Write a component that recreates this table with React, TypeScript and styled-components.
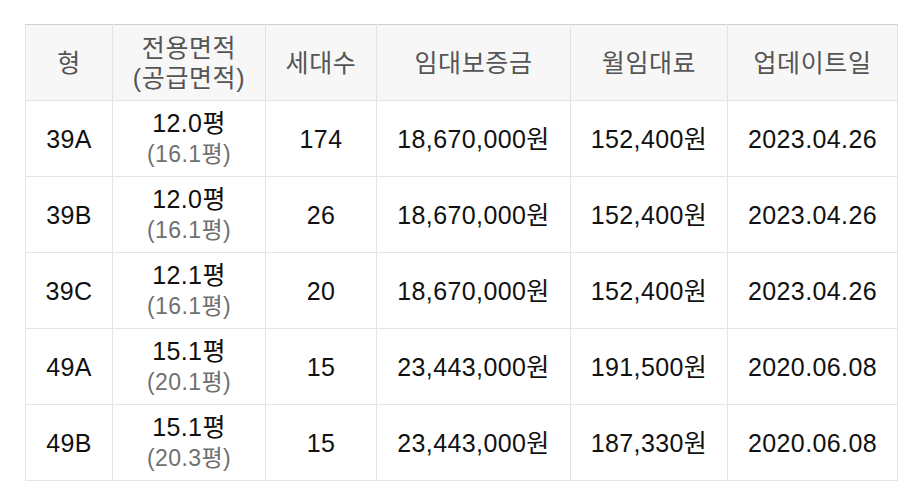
import React from 'react'
import styled, { createGlobalStyle } from 'styled-components'

type Row = {
  type: string
  area: string
  supply: string
  units: string
  deposit: string
  rent: string
  updated: string
}

const rows: Row[] = [
  { type: '39A', area: '12.0평', supply: '(16.1평)', units: '174', deposit: '18,670,000원', rent: '152,400원', updated: '2023.04.26' },
  { type: '39B', area: '12.0평', supply: '(16.1평)', units: '26', deposit: '18,670,000원', rent: '152,400원', updated: '2023.04.26' },
  { type: '39C', area: '12.1평', supply: '(16.1평)', units: '20', deposit: '18,670,000원', rent: '152,400원', updated: '2023.04.26' },
  { type: '49A', area: '15.1평', supply: '(20.1평)', units: '15', deposit: '23,443,000원', rent: '191,500원', updated: '2020.06.08' },
  { type: '49B', area: '15.1평', supply: '(20.3평)', units: '15', deposit: '23,443,000원', rent: '187,330원', updated: '2020.06.08' },
]

const colWidths = [87, 153, 111, 194, 157, 170]

const App: React.FC = () => {
  return (
    <>
      <GlobalStyle />
      <Page>
        <Table>
          <colgroup>
            {colWidths.map((w, i) => (
              <col key={i} style={{ width: w }} />
            ))}
          </colgroup>
          <thead>
            <tr>
              <HeadCell>형</HeadCell>
              <HeadCell>
                전용면적
                <br />
                (공급면적)
              </HeadCell>
              <HeadCell>세대수</HeadCell>
              <HeadCell>임대보증금</HeadCell>
              <HeadCell>월임대료</HeadCell>
              <HeadCell>업데이트일</HeadCell>
            </tr>
          </thead>
          <tbody>
            {rows.map((r) => (
              <tr key={r.type}>
                <Cell>{r.type}</Cell>
                <Cell>
                  {r.area}
                  <br />
                  <SubText>{r.supply}</SubText>
                </Cell>
                <Cell>{r.units}</Cell>
                <Cell>{r.deposit}</Cell>
                <Cell>{r.rent}</Cell>
                <Cell>{r.updated}</Cell>
              </tr>
            ))}
          </tbody>
        </Table>
      </Page>
    </>
  )
}

const GlobalStyle = createGlobalStyle`
  html, body {
    margin: 0;
    padding: 0;
    background: #ffffff;
  }
  body {
    font-family: "Liberation Sans", Arial, "Noto Sans CJK KR", sans-serif;
  }
`
const Page = styled.div`
  padding: 24px 0 0 25px;
`
const Table = styled.table`
  border-collapse: collapse;
  table-layout: fixed;
  width: 872px;
  border-top: 1px solid #cfcfcf;
`
const HeadCell = styled.th`
  height: 75px;
  padding: 0;
  background: #f7f7f7;
  border: 1px solid #e4e4e4;
  border-top-color: #cfcfcf;
  color: #555555;
  font-size: 25px;
  font-weight: normal;
  line-height: 30px;
  letter-spacing: 0.6px;
  text-align: center;
  vertical-align: middle;
`
const Cell = styled.td`
  height: 75px;
  padding: 0;
  border: 1px solid #e4e4e4;
  color: #111111;
  font-size: 25px;
  line-height: 30px;
  letter-spacing: 0.4px;
  text-align: center;
  vertical-align: middle;
`
const SubText = styled.span`
  color: #707070;
  font-size: 23px;
`

export default App
